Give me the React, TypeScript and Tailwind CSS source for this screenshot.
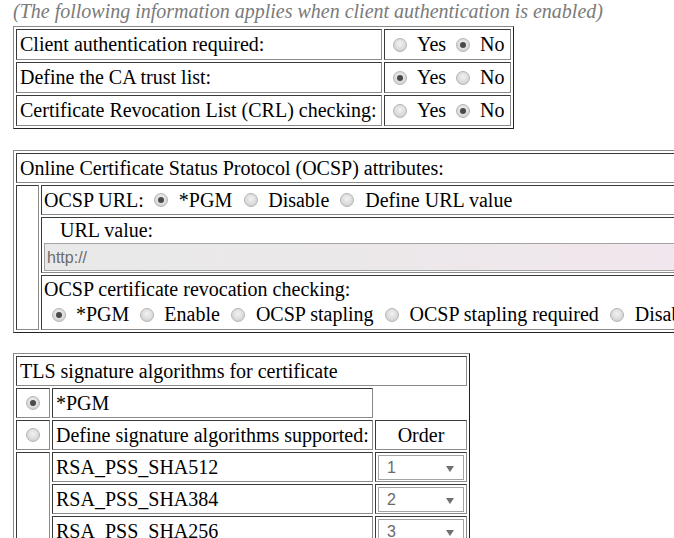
import React from "react";

const cellCls =
  "border border-t-[#3a3a3a] border-l-[#3a3a3a] border-r-[#8a8a8a] border-b-[#8a8a8a]";
const tableCls =
  "border border-t-[#8a8a8a] border-l-[#8a8a8a] border-r-[#222] border-b-[#222] p-[2px] gap-[2px]";

function Radio({ checked = false, className = "" }: { checked?: boolean; className?: string }) {
  return (
    <span
      className={
        "relative inline-block w-[14px] h-[14px] shrink-0 rounded-full border border-[#b4b4b4] bg-[radial-gradient(circle_at_50%_40%,#f2f2f2_0%,#dcdcdc_55%,#c6c6c6_100%)] " +
        className
      }
    >
      {checked && (
        <span className="absolute left-1/2 top-1/2 w-[6px] h-[6px] -translate-x-1/2 -translate-y-1/2 rounded-full bg-[#4a4a4a]" />
      )}
    </span>
  );
}

function YesNo({ yes }: { yes: boolean }) {
  return (
    <div className={cellCls + " flex items-center pl-[8px]"}>
      <Radio checked={yes} className="mr-[10px]" />
      <span>Yes</span>
      <Radio checked={!yes} className="ml-[10px] mr-[10px]" />
      <span>No</span>
    </div>
  );
}

function Select({ value }: { value: string }) {
  return (
    <div className={cellCls + " flex items-start pt-[2px] px-[2px]"}>
      <div className="relative w-[86px] h-[25px] border border-[#a3a3a3] bg-white flex items-center pl-[8px] font-['Liberation_Sans',sans-serif] text-[16px] text-[#6a6a6a]">
        {value}
        <svg className="absolute right-[9px] top-[10px]" width="8" height="6" viewBox="0 0 8 6">
          <polygon points="0,0 8,0 4,6" fill="#6f6f6f" />
        </svg>
      </div>
    </div>
  );
}

export default function App() {
  const algs = [
    ["RSA_PSS_SHA512", "1"],
    ["RSA_PSS_SHA384", "2"],
    ["RSA_PSS_SHA256", "3"],
    ["ECDSA_SHA512", "4"],
  ];
  return (
    <div className="w-[674px] h-[538px] overflow-hidden bg-white text-black font-['Liberation_Serif',serif] text-[20px] leading-[23px]">
      <div className="h-[26px] pl-[13px] italic text-[#7a7a7a] leading-[22px] whitespace-nowrap">
        (The following information applies when client authentication is enabled)
      </div>

      {/* Table 1 */}
      <div className={tableCls + " ml-[13px] w-[501px] grid grid-cols-[366px_127px] auto-rows-[31px]"}>
        <div className={cellCls + " flex items-center px-[3px]"}>Client authentication required:</div>
        <YesNo yes={false} />
        <div className={cellCls + " flex items-center px-[3px]"}>Define the CA trust list:</div>
        <YesNo yes={true} />
        <div className={cellCls + " flex items-center px-[3px] whitespace-nowrap"}>
          Certificate Revocation List (CRL) checking:
        </div>
        <YesNo yes={false} />
      </div>

      {/* Table 2 */}
      <div
        className={
          tableCls +
          " ml-[13px] mt-[21px] w-[720px] grid grid-cols-[23px_1fr] grid-rows-[30px_30px_56px_55px]"
        }
      >
        <div className={cellCls + " col-span-2 flex items-center px-[3px] whitespace-nowrap"}>
          Online Certificate Status Protocol (OCSP) attributes:
        </div>
        <div className={cellCls + " row-span-3"} />
        <div className={cellCls + " flex items-center px-[2px] whitespace-nowrap"}>
          <span>OCSP URL:</span>
          <Radio checked className="ml-[10px] mr-[11px]" />
          <span>*PGM</span>
          <Radio className="ml-[12px] mr-[10px]" />
          <span>Disable</span>
          <Radio className="ml-[11px] mr-[11px]" />
          <span>Define URL value</span>
        </div>
        <div className={cellCls + " flex flex-col px-[2px] pt-[1px]"}>
          <div className="pl-[16px] h-[23px] whitespace-nowrap">URL value:</div>
          <div className="mt-[1px] h-[28px] border border-[#a3a3a3] bg-[linear-gradient(90deg,#e9e9e9_0%,#ece8ea_50%,#f2e6ee_100%)] flex items-center pl-[2px] font-['Liberation_Sans',sans-serif] text-[16px] text-[#6b6b6b]">
            http://
          </div>
        </div>
        <div className={cellCls + " flex flex-col px-[2px] pt-[1px] whitespace-nowrap"}>
          <div className="h-[25px] flex items-center">OCSP certificate revocation checking:</div>
          <div className="h-[25px] flex items-center">
            <Radio checked className="ml-[8px] mr-[10px]" />
            <span>*PGM</span>
            <Radio className="ml-[11px] mr-[10px]" />
            <span>Enable</span>
            <Radio className="ml-[11px] mr-[11px]" />
            <span>OCSP stapling</span>
            <Radio className="ml-[11px] mr-[11px]" />
            <span>OCSP stapling required</span>
            <Radio className="ml-[11px] mr-[11px]" />
            <span>Disable</span>
          </div>
        </div>
      </div>

      {/* Table 3 */}
      <div
        className={
          tableCls + " ml-[13px] mt-[20px] w-[457px] grid grid-cols-[34px_321px_92px] auto-rows-[30px]"
        }
      >
        <div className={cellCls + " col-span-3 flex items-center px-[3px]"}>
          TLS signature algorithms for certificate
        </div>
        <div className={cellCls + " flex items-center justify-center"}>
          <Radio checked />
        </div>
        <div className={cellCls + " flex items-center px-[3px]"}>*PGM</div>
        <div />
        <div className={cellCls + " flex items-center justify-center"}>
          <Radio />
        </div>
        <div className={cellCls + " flex items-center px-[3px] whitespace-nowrap"}>
          Define signature algorithms supported:
        </div>
        <div className={cellCls + " flex items-center justify-center"}>Order</div>
        <div className={cellCls + " row-span-4"} />
        {algs.map(([name, order]) => (
          <React.Fragment key={name}>
            <div className={cellCls + " flex items-center px-[3px]"}>{name}</div>
            <Select value={order} />
          </React.Fragment>
        ))}
      </div>
    </div>
  );
}
